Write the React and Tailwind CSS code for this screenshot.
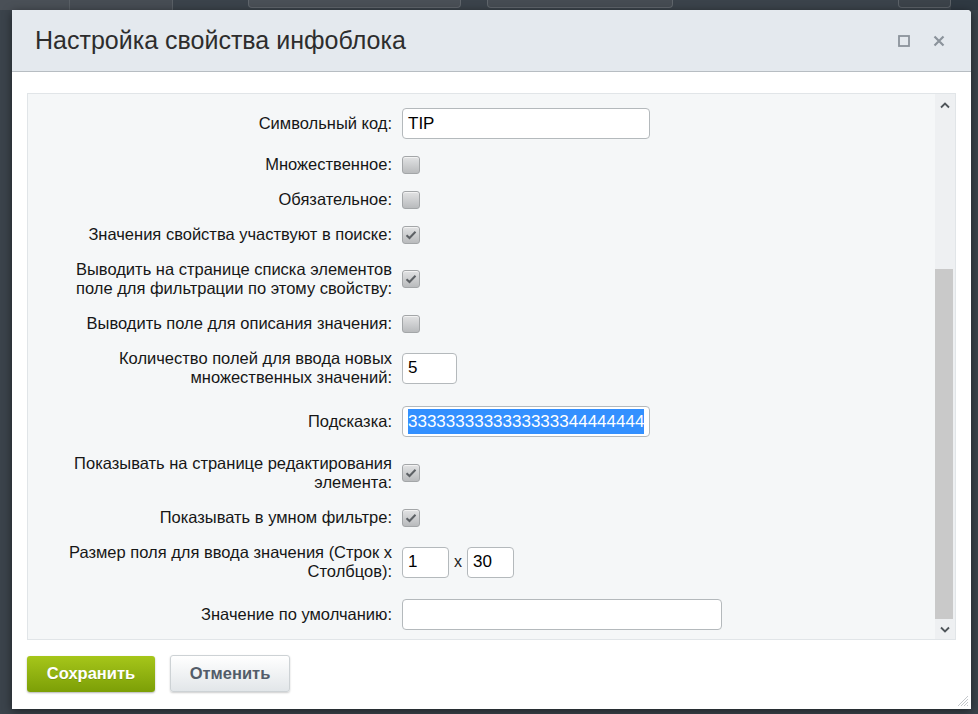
import { useState } from "react";

const font = { fontFamily: '"Liberation Sans", Arial, sans-serif' };

// серый чекбокс в стиле старой админки
const Check = ({ checked }) => (
  <span className="inline-flex w-[18px] h-[18px] items-center justify-center rounded-[3px] border border-[#a3a6a8] bg-gradient-to-b from-[#e2e3e4] to-[#b9bbbd] shadow-[inset_0_1px_0_#f2f2f2]">
    {checked && (
      <svg width="12" height="10" viewBox="0 0 12 10">
        <polyline points="1.5,5.2 4.5,8 10.5,1.8" fill="none" stroke="#5d6165" strokeWidth="2" />
      </svg>
    )}
  </span>
);

const Input = ({ value, className = "", selected }) => (
  <div className={`h-[31px] rounded-[4px] border border-[#b4b9bc] bg-white flex items-center px-[5px] text-[17px] text-black overflow-hidden whitespace-nowrap ${className}`}>
    {selected ? <span className="bg-[#3390ff] text-white">{value}</span> : value}
  </div>
);

const Row = ({ label, children, pad = "py-[8px]" }) => (
  <div className={`flex items-center ${pad}`}>
    <div className="w-[374px] shrink-0 pl-[40px] pr-[10px] text-right text-[16.5px] leading-[19px] text-[#161616]">
      {label}
    </div>
    <div className="flex items-center">{children}</div>
  </div>
);

export default function App() {
  const [rows] = useState([
    { label: "Множественное:", checked: false },
    { label: "Обязательное:", checked: false },
    { label: "Значения свойства участвуют в поиске:", checked: true },
    { label: "Выводить на странице списка элементов поле для фильтрации по этому свойству:", checked: true },
    { label: "Выводить поле для описания значения:", checked: false },
  ]);

  return (
    <div style={font} className="w-[978px] h-[714px] bg-[#3b434b] overflow-hidden">
      {/* кусок страницы под диалогом */}
      <div className="h-[10px] flex">
        <div className="w-[70px] h-full border-r border-[#5a6066] bg-[#4a5057]" />
        <div className="w-[103px] h-full border-r border-[#5a6066] bg-[#474d54]" />
        <div className="ml-[75px] w-[213px] h-[8px] rounded-b-[4px] border border-t-0 border-[#60666c] bg-[#4a5057]" />
        <div className="ml-[26px] w-[186px] h-[8px] rounded-b-[4px] border border-t-0 border-[#60666c] bg-[#464c53]" />
        <div className="ml-[225px] w-[53px] h-[8px] rounded-b-[4px] border border-t-0 border-[#5c6268] bg-[#3c434a]" />
        <div className="flex-1 h-full bg-[#2f3942]" />
      </div>

      <div className="ml-[12px] w-[959px] h-[699px] bg-white rounded-tr-[4px] rounded-tl-[2px] shadow-[0_2px_10px_rgba(0,0,0,0.5)] flex flex-col relative">
        <div className="h-[62px] bg-[#e4e9ee] border-b border-[#b7bdc2] rounded-tr-[4px] flex items-center pl-[23px] pr-[26px]">
          <h1 className="text-[25px] text-[#2d2d2d] flex-1">Настройка свойства инфоблока</h1>
          <svg width="12" height="12" viewBox="0 0 12 12" className="mr-[23px]">
            <rect x="1" y="1" width="10" height="10" fill="none" stroke="#8b939b" strokeWidth="1.8" />
          </svg>
          <svg width="12" height="12" viewBox="0 0 12 12">
            <path d="M1.5 1.5 L10.5 10.5 M10.5 1.5 L1.5 10.5" stroke="#8b939b" strokeWidth="2.2" />
          </svg>
        </div>

        <div className="mt-[21px] mx-[15px] h-[547px] border border-[#e1e5e8] bg-[#f5f7f8] flex">
          <div className="flex-1 pt-[6px]">
            <Row label="Символьный код:">
              <Input value="TIP" className="w-[248px]" />
            </Row>
            {rows.map((r) => (
              <Row key={r.label} label={r.label}>
                <Check checked={r.checked} />
              </Row>
            ))}
            <Row label="Количество полей для ввода новых множественных значений:">
              <Input value="5" className="w-[55px]" />
            </Row>
            <Row label="Подсказка:" pad="pt-[11px] pb-[9px]">
              <Input value="3333333333333333344444444" selected className="w-[248px] px-[4px]" />
            </Row>
            <Row label="Показывать на странице редактирования элемента:">
              <Check checked />
            </Row>
            <Row label="Показывать в умном фильтре:">
              <Check checked />
            </Row>
            <Row label="Размер поля для ввода значения (Строк x Столбцов):">
              <Input value="1" className="w-[47px]" />
              <span className="mx-[5px] text-[16px] text-[#222]">x</span>
              <Input value="30" className="w-[47px]" />
            </Row>
            <Row label="Значение по умолчанию:" pad="pt-[10px] pb-[8px]">
              <Input value="" className="w-[320px]" />
            </Row>
          </div>

          {/* полоса прокрутки */}
          <div className="w-[20px] bg-[#eef0f2] flex flex-col items-center">
            <svg width="12" height="8" viewBox="0 0 12 8" className="mt-[7px]">
              <polyline points="2,6.5 6,2.5 10,6.5" fill="none" stroke="#4f555a" strokeWidth="1.8" />
            </svg>
            <div className="w-[18px] mt-[160px] h-[350px] bg-[#c9c9c9] self-start" />
            <svg width="12" height="8" viewBox="0 0 12 8" className="mt-[7px]">
              <polyline points="2,1.5 6,5.5 10,1.5" fill="none" stroke="#4f555a" strokeWidth="1.8" />
            </svg>
          </div>
        </div>

        <div className="flex items-center gap-[15px] pl-[15px] mt-[15px]">
          <button className="w-[128px] h-[36px] rounded-[3px] bg-gradient-to-b from-[#a6c61a] to-[#7c9f06] text-white font-bold text-[16.5px] shadow-[0_1px_2px_rgba(0,0,0,0.3)] [text-shadow:0_1px_0_rgba(0,0,0,0.15)]">
            Сохранить
          </button>
          <button className="w-[120px] h-[37px] rounded-[3px] border border-[#cdd2d5] bg-gradient-to-b from-white to-[#e2e6e9] text-[#535c69] font-bold text-[16.5px] shadow-[0_1px_2px_rgba(0,0,0,0.2)]">
            Отменить
          </button>
        </div>

        {/* уголок для изменения размера */}
        <svg width="14" height="14" viewBox="0 0 14 14" className="absolute right-[2px] bottom-[2px]">
          <path d="M13 3 L3 13 M13 6 L6 13 M13 9 L9 13 M13 12 L12 13" stroke="#c4c8cc" strokeWidth="1" />
        </svg>
      </div>
    </div>
  );
}
